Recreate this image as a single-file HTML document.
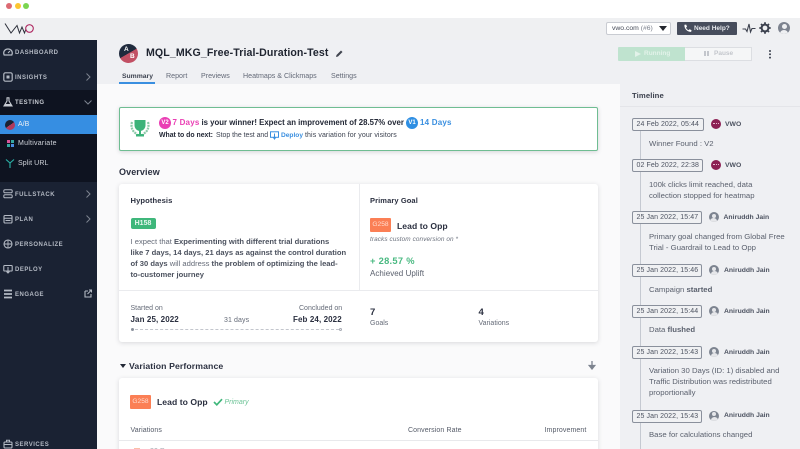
<!DOCTYPE html>
<html>
<head>
<meta charset="utf-8">
<style>
*{box-sizing:border-box}
html,body{margin:0;padding:0;width:800px;height:449px;overflow:hidden}
#root{position:relative;width:800px;height:449px;overflow:hidden;background:#fff;font-family:"Liberation Sans",sans-serif;color:#2b3040}
.a{position:absolute;white-space:nowrap}
.nav{position:absolute;left:15px;font-size:6px;font-weight:bold;letter-spacing:.5px;color:#b4bac4;white-space:nowrap}
.ni{position:absolute;left:3px;width:10px;height:10px}
.chev{position:absolute;left:84px;width:8px;height:8px}
.ts{position:absolute;height:13px;border:1px solid #8a909c;border-radius:2px;font-size:7px;color:#4d5361;line-height:11px;padding-left:3.5px;white-space:nowrap;background:#f0f1f3;letter-spacing:.1px}
.tn{position:absolute;font-size:6.8px;font-weight:bold;color:#4d5361;white-space:nowrap}
.tt{position:absolute;left:649px;font-size:7.75px;line-height:11.2px;color:#5b616e;white-space:nowrap}
.av{position:absolute;width:10px;height:10px;border-radius:50%;background:#7d8490;overflow:hidden}
.av:before{content:"";position:absolute;left:3px;top:1.5px;width:4px;height:4px;border-radius:50%;background:#e6e7ea}
.av:after{content:"";position:absolute;left:1.5px;top:6px;width:7px;height:6px;border-radius:50%;background:#e6e7ea}
.vw{position:absolute;width:10px;height:10px;border-radius:50%;background:#8c1f53}
.vw:after{content:"";position:absolute;left:2px;top:4px;width:6px;height:2px;border-top:1px dotted #e8b7cf}
.card{position:absolute;background:#fff;border-radius:3px;box-shadow:0 1px 5px rgba(60,65,80,.18)}
</style>
</head>
<body>
<div id="root">
<!-- window bar -->
<div class="a" style="left:6px;top:3px;width:6px;height:6px;border-radius:50%;background:#dc6a73"></div>
<div class="a" style="left:14.5px;top:3px;width:6px;height:6px;border-radius:50%;background:#fcc531"></div>
<div class="a" style="left:23px;top:3px;width:6px;height:6px;border-radius:50%;background:#7bd551"></div>
<!-- header -->
<div class="a" style="left:0;top:18px;width:800px;height:22px;background:#eff0f2"></div>
<svg class="a" style="left:4px;top:22px" width="31" height="13" viewBox="0 0 31 13"><path d="M1 1.500L7 11L13 3.500L15.500 11L18 5L20.500 11L22 7" fill="none" stroke="#2c2f3a" stroke-width="1"/><circle cx="25.500" cy="6.500" r="3.800" fill="none" stroke="#b02a63" stroke-width="1.100"/></svg>
<div class="a" style="left:606px;top:22px;width:65px;height:13px;background:#fff;border:1px solid #c9ccd2;border-radius:2px;font-size:6.800px;line-height:11px;padding-left:5px;color:#444a57">vwo.com <span style="color:#777d89">(#6)</span></div>
<svg class="a" style="left:659px;top:26px" width="8" height="5"><path d="M0 0H8L4 5Z" fill="#23262e"/></svg>
<div class="a" style="left:677px;top:22px;width:60px;height:13px;background:#474d5c;border-radius:1px;font-size:6.500px;font-weight:bold;line-height:13px;padding-left:17px;color:#e8eaee">Need Help?</div>
<svg class="a" style="left:683px;top:24px" width="9" height="9" viewBox="0 0 9 9"><path d="M1.500 .8L3.200.6L4 2.700L3 3.600C3.500 4.800 4.300 5.600 5.500 6.200L6.500 5.200L8.500 6.100L8.200 7.800C5 8.600.7 4.500 1.500.8Z" fill="#fff"/></svg>
<svg class="a" style="left:742px;top:22px" width="14" height="13" viewBox="0 0 14 13"><path d="M.5 7H3.500L5 9.500L7 2L8.500 10L10 6.500H13.500" fill="none" stroke="#3c414e" stroke-width="1.100"/></svg>
<svg class="a" style="left:759px;top:22px" width="12" height="12" viewBox="0 0 12 12"><circle cx="6" cy="6" r="3.400" fill="none" stroke="#3c414e" stroke-width="2"/><path d="M6 .3V2.500M6 9.500V11.700M.3 6H2.500M9.500 6H11.700M2 2L3.500 3.500M8.500 8.500L10 10M10 2L8.500 3.500M3.500 8.500L2 10" stroke="#3c414e" stroke-width="1.800"/></svg>
<div class="a" style="left:778px;top:22px;width:12px;height:12px;border-radius:50%;background:#7d838f;overflow:hidden"><div class="a" style="left:3.500px;top:2px;width:5px;height:5px;border-radius:50%;background:#eff0f2"></div><div class="a" style="left:2px;top:7.500px;width:8px;height:7px;border-radius:50%;background:#eff0f2"></div></div>
<!-- page header -->
<div class="a" style="left:97px;top:40px;width:703px;height:44px;background:#eff0f3"></div>
<!-- main -->
<div class="a" style="left:97px;top:84px;width:523px;height:365px;background:#fafafb"></div>
<!-- sidebar -->
<div class="a" style="left:0;top:40px;width:97px;height:409px;background:#1a2233"></div>
<div class="a" style="left:0;top:90px;width:97px;height:92px;background:#0e1320"></div>
<div class="a" style="left:0;top:115px;width:97px;height:19px;background:#368ee2"></div>

<svg class="ni" style="top:47px" viewBox="0 0 10 10"><path d="M1.200 8C-.3 4.800 2 2 5 2S10.300 4.800 8.800 8Z" fill="none" stroke="#b4bac4" stroke-width="1.300"/><path d="M5 6L7 4" stroke="#b4bac4"/></svg>
<div class="nav" style="top:49.500px">DASHBOARD</div>
<svg class="ni" style="top:72px" viewBox="0 0 10 10"><rect x=".8" y=".8" width="8.400" height="8.400" rx="1.500" fill="none" stroke="#b4bac4" stroke-width="1.200"/><rect x="3.500" y="3.500" width="3" height="3" fill="#b4bac4"/></svg>
<div class="nav" style="top:74.500px">INSIGHTS</div>
<svg class="chev" style="top:73px" viewBox="0 0 8 8"><path d="M2.500 .5L6 4L2.500 7.500" fill="none" stroke="#7d8490" stroke-width="1"/></svg>
<svg class="ni" style="top:97px" viewBox="0 0 10 10"><path d="M3.500 .8H6.500M4 1V4L1 9H9L6 4V1" fill="none" stroke="#c8ccd3" stroke-width="1.100"/><path d="M2.500 7H7.500L8.500 9H1.500Z" fill="#c8ccd3"/></svg>
<div class="nav" style="top:99.500px;color:#c8ccd3">TESTING</div>
<svg class="chev" style="top:98px" viewBox="0 0 8 8"><path d="M.5 2.500L4 6L7.500 2.500" fill="none" stroke="#7d8490" stroke-width="1"/></svg>

<div class="a" style="left:5px;top:119.500px;width:10px;height:10px;border-radius:50%;background:linear-gradient(145deg,#1a2233 50%,#b03a5b 50%)"></div>
<div class="a" style="left:18px;top:120.500px;font-size:7px;color:#e8ecf2">A/B</div>
<div class="a" style="left:7px;top:140px;width:3px;height:3px;background:#d8559a"></div><div class="a" style="left:11px;top:140px;width:3px;height:3px;background:#34a7a0"></div><div class="a" style="left:7px;top:144px;width:3px;height:3px;background:#34a7a0"></div><div class="a" style="left:11px;top:144px;width:3px;height:3px;background:#4a8ee0"></div>
<div class="a" style="left:18px;top:140px;font-size:7px;color:#cfd3da;letter-spacing:.25px">Multivariate</div>
<svg class="a" style="left:5px;top:158px" width="10" height="11" viewBox="0 0 10 11"><path d="M1 1.500L5 5L9 1.500M5 5V10" fill="none" stroke="#2bb3a8" stroke-width="1.100"/></svg>
<div class="a" style="left:18px;top:159.500px;font-size:7px;color:#cfd3da;letter-spacing:.1px">Split URL</div>

<svg class="ni" style="top:189px" viewBox="0 0 10 10"><rect x=".8" y=".8" width="8.400" height="3" rx="1.200" fill="none" stroke="#b4bac4"/><rect x=".8" y="5.800" width="8.400" height="3" rx="1.200" fill="none" stroke="#b4bac4"/></svg>
<div class="nav" style="top:191.500px">FULLSTACK</div>
<svg class="chev" style="top:190px" viewBox="0 0 8 8"><path d="M2.500 .5L6 4L2.500 7.500" fill="none" stroke="#7d8490" stroke-width="1"/></svg>
<svg class="ni" style="top:214px" viewBox="0 0 10 10"><rect x="1" y="1.500" width="8" height="7.500" rx="1" fill="none" stroke="#b4bac4" stroke-width="1.100"/><path d="M1 4.200H9M2.500 6.500H7.500" stroke="#b4bac4"/></svg>
<div class="nav" style="top:216.500px">PLAN</div>
<svg class="chev" style="top:215px" viewBox="0 0 8 8"><path d="M2.500 .5L6 4L2.500 7.500" fill="none" stroke="#7d8490" stroke-width="1"/></svg>
<svg class="ni" style="top:239px" viewBox="0 0 10 10"><circle cx="5" cy="5" r="4" fill="none" stroke="#b4bac4" stroke-width="1.100"/><path d="M1 5H9M5 1V9" stroke="#b4bac4" stroke-width=".9"/></svg>
<div class="nav" style="top:241.500px">PERSONALIZE</div>
<svg class="ni" style="top:264px" viewBox="0 0 10 10"><rect x=".8" y="1.500" width="8.400" height="5.500" rx=".8" fill="none" stroke="#b4bac4" stroke-width="1.100"/><path d="M5 3V9M3.500 7.500L5 9L6.500 7.500" fill="none" stroke="#b4bac4"/></svg>
<div class="nav" style="top:266.500px">DEPLOY</div>
<svg class="ni" style="top:289px" viewBox="0 0 10 10"><path d="M1 1.500H9M1 5H9M1 8.500H9" stroke="#b4bac4" stroke-width="1.800"/></svg>
<div class="nav" style="top:291.500px">ENGAGE</div>
<svg class="a" style="left:84px;top:289px" width="8" height="9" viewBox="0 0 8 9"><path d="M1 2H4M1 2V8H7V5" fill="none" stroke="#b4bac4" stroke-width="1.100"/><path d="M3.500 5L7 1.500M5 1H7.500V3.500" fill="none" stroke="#b4bac4"/></svg>
<svg class="ni" style="top:439px" viewBox="0 0 10 10"><rect x="1" y="3" width="8" height="6" rx="1" fill="none" stroke="#b4bac4" stroke-width="1.100"/><path d="M3.500 3V1.200H6.500V3M1 5.500H9" fill="none" stroke="#b4bac4"/></svg>
<div class="nav" style="top:442px">SERVICES</div>

<!-- title -->
<div class="a" style="left:119px;top:44px;width:19px;height:19px;border-radius:50%;background:linear-gradient(150deg,#1f2a3d 49%,#c25064 50%)"></div>
<div class="a" style="left:124px;top:46px;font-size:6.500px;font-weight:bold;color:#fff">A</div>
<div class="a" style="left:130px;top:53px;font-size:6.500px;font-weight:bold;color:#fff">B</div>
<div class="a" style="left:146px;top:46.500px;font-size:10.600px;font-weight:bold;color:#1f2430;letter-spacing:.1px">MQL_MKG_Free-Trial-Duration-Test</div>
<svg class="a" style="left:335px;top:49px" width="9" height="9" viewBox="0 0 9 9"><path d="M1 8L1.500 6L6 1.500L7.500 3L3 7.500Z" fill="#40444f"/></svg>
<!-- tabs -->
<div class="a" style="left:122px;top:72.500px;font-size:6.800px;font-weight:bold;color:#3d4350">Summary</div>
<div class="a" style="left:119px;top:82px;width:36px;height:2px;background:#3a8fe0"></div>
<div class="a" style="left:166px;top:72px;font-size:7.100px;color:#636977">Report</div>
<div class="a" style="left:201px;top:72px;font-size:7.100px;color:#636977">Previews</div>
<div class="a" style="left:243px;top:72px;font-size:7.100px;color:#636977">Heatmaps &amp; Clickmaps</div>
<div class="a" style="left:331px;top:72px;font-size:7.100px;color:#636977">Settings</div>
<!-- run/pause -->
<div class="a" style="left:618px;top:47px;width:67px;height:14px;background:#bfe3cf;border-radius:1px 0 0 1px;font-size:6.500px;font-weight:bold;color:#e2f2e9;line-height:14px;padding-left:26px">Running</div>
<svg class="a" style="left:635px;top:51px" width="6" height="6"><path d="M0 0L6 3L0 6Z" fill="#e2f2e9"/></svg>
<div class="a" style="left:685px;top:47px;width:67px;height:14px;background:#f5f6f7;border:1px solid #dcdee2;border-left:0;font-size:6.500px;font-weight:bold;color:#c3c6cc;line-height:12px;padding-left:29px">Pause</div>
<div class="a" style="left:704px;top:51px;width:2px;height:5px;background:#c3c6cc"></div><div class="a" style="left:707px;top:51px;width:2px;height:5px;background:#c3c6cc"></div>
<div class="a" style="left:769px;top:50px;width:2px;height:2px;border-radius:50%;background:#3c414e;box-shadow:0 3.300px 0 #3c414e,0 6.600px 0 #3c414e"></div>

<!-- banner -->
<div class="a" style="left:119px;top:107px;width:479px;height:44px;background:#fff;border:1.300px solid #6fbd92;border-radius:2px;box-shadow:0 1px 4px rgba(60,65,80,.2)"></div>
<svg class="a" style="left:130px;top:119px" width="20" height="19" viewBox="0 0 20 19"><path d="M4.500 1H15.500V6C15.500 10 12.500 12 10 12S4.500 10 4.500 6Z" fill="#3db37a"/><path d="M9 11.500H11V15H9ZM6 15H14V17.500H6Z" fill="#3db37a"/><path d="M2 3C.5 8 2.500 13 7 15M18 3C19.500 8 17.500 13 13 15" fill="none" stroke="#8ccaa9" stroke-width="2.200" stroke-dasharray="2 .8"/></svg>
<div class="a" style="left:159px;top:116.500px;width:12px;height:12px;border-radius:50%;background:#ea3fb4;color:#fff;font-size:6px;font-weight:bold;text-align:center;line-height:12px">V2</div>
<div class="a" style="left:172.500px;top:118px;font-size:8px;font-weight:bold;color:#ea3fb4;letter-spacing:.2px">7 Days</div>
<div class="a" style="left:201.500px;top:118px;font-size:7.800px;font-weight:bold;color:#232836">is your winner! Expect an improvement of 28.57% over</div>
<div class="a" style="left:406px;top:116.500px;width:12px;height:12px;border-radius:50%;background:#2f8fe3;color:#fff;font-size:6px;font-weight:bold;text-align:center;line-height:12px">V1</div>
<div class="a" style="left:420px;top:118px;font-size:8px;font-weight:bold;color:#3a8fe0;letter-spacing:.2px">14 Days</div>
<div class="a" style="left:159px;top:132px;font-size:6.900px;font-weight:bold;color:#232836">What to do next:</div>
<div class="a" style="left:216px;top:132px;font-size:6.900px;color:#3c4250">Stop the test and</div>
<svg class="a" style="left:270px;top:130.500px" width="9" height="9" viewBox="0 0 9 9"><rect x=".5" y=".8" width="8" height="5.500" fill="none" stroke="#3a8fe0"/><path d="M4.500 2.500V8.500M3 6L4.500 8L6 6" fill="none" stroke="#3a8fe0"/></svg>
<div class="a" style="left:281px;top:132px;font-size:6.600px;font-weight:bold;color:#3a8fe0">Deploy</div>
<div class="a" style="left:305px;top:132px;font-size:7px;color:#3c4250;letter-spacing:.1px">this variation for your visitors</div>

<!-- overview -->
<div class="a" style="left:119px;top:167px;font-size:9px;font-weight:bold;color:#2b3040;letter-spacing:.1px">Overview</div>
<div class="card" style="left:119px;top:184px;width:479px;height:158px"></div>
<div class="a" style="left:358.500px;top:184px;width:1px;height:106px;background:#eaebee"></div>
<div class="a" style="left:119px;top:290px;width:479px;height:1px;background:#eaebee"></div>
<div class="a" style="left:130.500px;top:196px;font-size:7.600px;font-weight:bold;color:#2b3040;letter-spacing:.1px">Hypothesis</div>
<div class="a" style="left:130.500px;top:218px;width:25px;height:11px;background:#3fb77b;border-radius:2px;color:#e8f7ef;font-size:7px;font-weight:bold;text-align:center;line-height:11px">H158</div>
<div class="a" style="left:130.500px;top:235.500px;font-size:7.600px;line-height:11.100px;color:#656b78;font-weight:normal">
I expect that <b style="color:#4b515e">Experimenting with different trial durations</b><br>
<b style="color:#4b515e">like 7 days, 14 days, 21 days as against the control duration</b><br>
<b style="color:#4b515e">of 30 days</b> will address <b style="color:#4b515e">the problem of optimizing the lead-</b><br>
<b style="color:#4b515e">to-customer journey</b></div>
<div class="a" style="left:130.500px;top:305px;font-size:7px;color:#656b78">Started on</div>
<div class="a" style="left:130.500px;top:314.500px;font-size:8px;font-weight:bold;color:#2b3040;letter-spacing:.1px">Jan 25, 2022</div>
<div class="a" style="left:224px;top:316.500px;font-size:7px;color:#656b78;letter-spacing:.1px">31 days</div>
<div class="a" style="left:299px;top:305px;font-size:7px;color:#656b78">Concluded on</div>
<div class="a" style="left:293px;top:314.500px;font-size:8px;font-weight:bold;color:#2b3040;letter-spacing:.1px">Feb 24, 2022</div>
<div class="a" style="left:131px;top:327.500px;width:3px;height:3px;border-radius:50%;background:#8a909c"></div>
<div class="a" style="left:135px;top:328.500px;width:204px;border-top:1px dashed #c3c6cd"></div>
<div class="a" style="left:338.500px;top:327.500px;width:3px;height:3px;border-radius:50%;border:.7px solid #a8acb5"></div>
<div class="a" style="left:370px;top:196px;font-size:7.500px;font-weight:bold;color:#2b3040;letter-spacing:.1px">Primary Goal</div>
<div class="a" style="left:370px;top:218px;width:21px;height:14px;background:#fb7f55;border-radius:1px;color:#ffdccf;font-size:6.600px;text-align:center;line-height:14px">G258</div>
<div class="a" style="left:397px;top:220.500px;font-size:8.600px;font-weight:bold;color:#2b3040;letter-spacing:.05px">Lead to Opp</div>
<div class="a" style="left:370px;top:235.500px;font-size:6.400px;font-style:italic;color:#6b717d;letter-spacing:.1px">tracks custom conversion on *</div>
<div class="a" style="left:370px;top:256px;font-size:9.300px;font-weight:bold;color:#49b981;letter-spacing:.3px">+ 28.57 %</div>
<div class="a" style="left:370px;top:269px;font-size:8px;color:#5b616e;letter-spacing:.05px">Achieved Uplift</div>
<div class="a" style="left:370px;top:306.500px;font-size:9.500px;font-weight:bold;color:#2b3040">7</div>
<div class="a" style="left:370px;top:320px;font-size:7px;color:#656b78">Goals</div>
<div class="a" style="left:478.500px;top:306.500px;font-size:9.500px;font-weight:bold;color:#2b3040">4</div>
<div class="a" style="left:478.500px;top:320px;font-size:7px;color:#656b78">Variations</div>

<!-- variation perf -->
<svg class="a" style="left:120px;top:364px" width="6" height="4"><path d="M0 0H6L3 4Z" fill="#232836"/></svg>
<div class="a" style="left:129px;top:360.500px;font-size:8.700px;font-weight:bold;color:#2b3040;letter-spacing:.1px">Variation Performance</div>
<svg class="a" style="left:588px;top:361px" width="8" height="9" viewBox="0 0 8 9"><path d="M4 0V7M1.200 4.500L4 8L6.800 4.500Z" stroke="#7d838f" stroke-width="1.300" fill="#7d838f"/></svg>
<div class="card" style="left:119px;top:378px;width:479px;height:80px"></div>
<div class="a" style="left:130px;top:395px;width:21px;height:14px;background:#fb7f55;border-radius:1px;color:#ffdccf;font-size:6.600px;text-align:center;line-height:14px">G258</div>
<div class="a" style="left:157px;top:396.500px;font-size:8.600px;font-weight:bold;color:#2b3040;letter-spacing:.05px">Lead to Opp</div>
<svg class="a" style="left:212.500px;top:398px" width="10" height="8" viewBox="0 0 10 8"><path d="M1 4L3.800 6.800L9 1.200" fill="none" stroke="#3fb77b" stroke-width="1.700"/></svg>
<div class="a" style="left:224.500px;top:398.500px;font-size:7px;font-style:italic;color:#6cc396">Primary</div>
<div class="a" style="left:130.500px;top:426.500px;font-size:7px;color:#555b68;letter-spacing:.08px">Variations</div>
<div class="a" style="left:408px;top:426.500px;font-size:7px;color:#555b68;letter-spacing:.1px">Conversion Rate</div>
<div class="a" style="left:544.500px;top:426.500px;font-size:7px;color:#555b68;letter-spacing:.1px">Improvement</div>
<div class="a" style="left:119px;top:440px;width:479px;height:1px;background:#e8e9ec"></div>
<div class="a" style="left:134px;top:448px;width:6px;height:1px;background:#fbbfa8"></div>
<div class="a" style="left:150px;top:448px;font-size:7px;color:#a0a4ad;letter-spacing:.1px">30 Days</div>

<!-- timeline -->
<div class="a" style="left:620px;top:84px;width:180px;height:365px;background:#eff0f3"></div>
<div class="a" style="left:632px;top:90.500px;font-size:7.700px;font-weight:bold;color:#3a3f4c;letter-spacing:.1px">Timeline</div>
<div class="a" style="left:620px;top:105.500px;width:180px;height:1px;background:#e4e5e9"></div>
<div class="a" style="left:639.500px;top:130px;width:1.500px;height:319px;background:#c5c9d1"></div>

<div class="ts" style="left:632px;top:118px;width:71.500px">24 Feb 2022, 05:44</div>
<div class="vw" style="left:711px;top:119px"></div>
<div class="tn" style="left:725px;top:120.500px">VWO</div>
<div class="tt" style="top:137.500px">Winner Found : V2</div>

<div class="ts" style="left:632px;top:159px;width:71px">02 Feb 2022, 22:38</div>
<div class="vw" style="left:710.500px;top:160px"></div>
<div class="tn" style="left:725px;top:161.500px">VWO</div>
<div class="tt" style="top:178.500px">100k clicks limit reached, data<br>collection stopped for heatmap</div>

<div class="ts" style="left:632px;top:211px;width:69.500px">25 Jan 2022, 15:47</div>
<div class="av" style="left:708.500px;top:212px"></div>
<div class="tn" style="left:723.500px;top:213.500px">Aniruddh Jain</div>
<div class="tt" style="top:230.500px">Primary goal changed from Global Free<br>Trial - Guardrail to Lead to Opp</div>

<div class="ts" style="left:632px;top:264px;width:69.500px">25 Jan 2022, 15:46</div>
<div class="av" style="left:709px;top:265px"></div>
<div class="tn" style="left:724px;top:266.500px">Aniruddh Jain</div>
<div class="tt" style="top:283.500px">Campaign <b>started</b></div>

<div class="ts" style="left:632px;top:305px;width:69.500px">25 Jan 2022, 15:44</div>
<div class="av" style="left:709px;top:306px"></div>
<div class="tn" style="left:724px;top:307.500px">Aniruddh Jain</div>
<div class="tt" style="top:324px">Data <b>flushed</b></div>

<div class="ts" style="left:632px;top:346px;width:69.500px">25 Jan 2022, 15:43</div>
<div class="av" style="left:709px;top:347px"></div>
<div class="tn" style="left:724px;top:348.500px">Aniruddh Jain</div>
<div class="tt" style="top:365px">Variation 30 Days (ID: 1) disabled and<br>Traffic Distribution was redistributed<br>proportionally</div>

<div class="ts" style="left:632px;top:409.500px;width:69.500px">25 Jan 2022, 15:43</div>
<div class="av" style="left:709px;top:410.500px"></div>
<div class="tn" style="left:724px;top:412px">Aniruddh Jain</div>
<div class="tt" style="top:428.500px">Base for calculations changed</div>
</div>
</body>
</html>
